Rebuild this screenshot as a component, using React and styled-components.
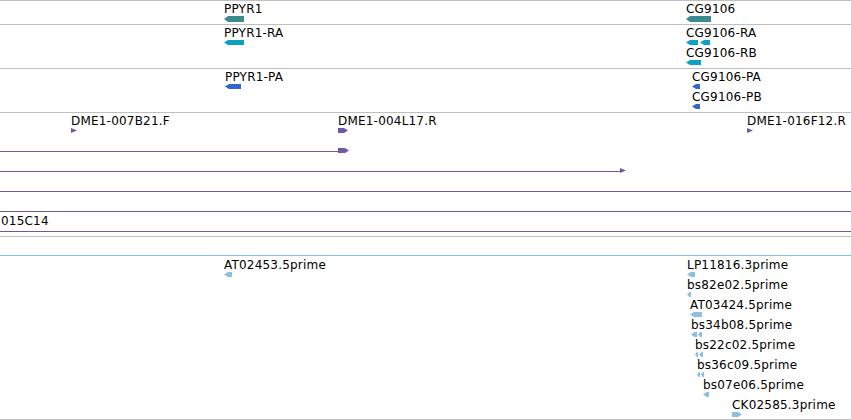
import styled, { createGlobalStyle } from 'styled-components';

const GlobalStyle = createGlobalStyle`
  html, body {
    margin: 0;
    padding: 0;
    background: #ffffff;
  }
  body {
    font-family: 'DejaVu Sans', 'Liberation Sans', sans-serif;
  }
`;

const WIDTH = 851;

const tracks = [
  {
    color: '#3b8b8d',
    h: 6,
    rows: [
      {
        features: [
          { x: 224, label: 'PPYR1', parts: [[0, 20, 'L']] },
          { x: 686, label: 'CG9106', parts: [[0, 25, 'L']] },
        ],
      },
    ],
  },
  {
    color: '#0ba2c2',
    h: 5,
    rows: [
      {
        features: [
          { x: 224, label: 'PPYR1-RA', parts: [[0, 20, 'L']] },
          { x: 686, label: 'CG9106-RA', parts: [[0, 12, 'L'], [14, 24, 'L']] },
        ],
      },
      {
        features: [{ x: 686, label: 'CG9106-RB', parts: [[0, 15, 'L']] }],
      },
    ],
  },
  {
    color: '#3366cc',
    h: 5,
    rows: [
      {
        features: [
          { x: 225, label: 'PPYR1-PA', parts: [[0, 16, 'L']] },
          { x: 692, label: 'CG9106-PA', parts: [[0, 8, 'L']] },
        ],
      },
      {
        features: [{ x: 692, label: 'CG9106-PB', parts: [[0, 8, 'L']] }],
      },
    ],
  },
  {
    color: '#6e58a8',
    h: 5,
    rows: [
      {
        features: [
          { x: 71, label: 'DME1-007B21.F', parts: [[0, 6, 'T']] },
          { x: 338, label: 'DME1-004L17.R', parts: [[0, 10, 'R']] },
          { x: 747, label: 'DME1-016F12.R', parts: [[0, 6, 'T']] },
        ],
      },
      {
        line: 338,
        features: [{ x: 338, label: '', parts: [[0, 11, 'R']] }],
      },
      {
        line: 620,
        features: [{ x: 620, label: '', parts: [[0, 6, 'T']] }],
      },
      { line: WIDTH, features: [] },
      { line: WIDTH, features: [] },
      {
        line: WIDTH,
        features: [{ x: 1, label: '015C14', parts: [] }],
      },
    ],
  },
  {
    color: '#8cbfe2',
    h: 5,
    last: true,
    rows: [
      { line: WIDTH, features: [] },
      {
        features: [
          { x: 224, label: 'AT02453.5prime', parts: [[0, 8, 'L']] },
          { x: 687, label: 'LP11816.3prime', parts: [[0, 8, 'L']] },
        ],
      },
      { features: [{ x: 687, label: 'bs82e02.5prime', parts: [[0, 4, 'L']] }] },
      { features: [{ x: 690, label: 'AT03424.5prime', parts: [[0, 12, 'L']] }] },
      { features: [{ x: 691, label: 'bs34b08.5prime', parts: [[0, 6, 'L'], [7, 11, 'L']] }] },
      { features: [{ x: 695, label: 'bs22c02.5prime', parts: [[0, 3, 'L'], [4, 8, 'L']] }] },
      { features: [{ x: 697, label: 'bs36c09.5prime', parts: [[0, 3, 'L'], [4, 7, 'L']] }] },
      { features: [{ x: 703, label: 'bs07e06.5prime', parts: [[0, 6, 'L']] }] },
      { features: [{ x: 732, label: 'CK02585.3prime', parts: [[0, 10, 'R']] }] },
    ],
  },
];

// arrow-shaped feature block; short blocks keep a bit of body behind the tip
const shape = ([a, b, dir], h) => {
  const t = Math.min(4, Math.max(2, (b - a) * 0.6));
  const m = h / 2;
  if (dir === 'L') return `${a},${m} ${a + t},0 ${b},0 ${b},${h} ${a + t},${h}`;
  if (dir === 'R') return `${a},0 ${b - t},0 ${b},${m} ${b - t},${h} ${a},${h}`;
  return `${a},0 ${b},${m} ${a},${h}`;
};

const Glyph = ({ parts, color, h }) => {
  if (!parts.length) return null;
  const w = Math.max(...parts.map(p => p[1]));
  return (
    <GlyphSvg width={w} height={h} viewBox={`0 0 ${w} ${h}`}>
      {parts.map((p, i) => (
        <polygon key={i} points={shape(p, h)} fill={color} />
      ))}
    </GlyphSvg>
  );
};

const App = () => {
  return (
    <>
      <GlobalStyle />
      <Panel>
        {tracks.map((track, ti) => (
          <Track key={ti} $last={track.last}>
            {track.rows.map((row, ri) => (
              <Row key={ri}>
                {row.line && <Line $to={row.line} $color={track.color} />}
                {row.features.map((f, fi) => (
                  <Feature key={fi} $x={f.x}>
                    <Label>{f.label}</Label>
                    <Glyph parts={f.parts} color={track.color} h={track.h} />
                  </Feature>
                ))}
              </Row>
            ))}
          </Track>
        ))}
      </Panel>
    </>
  );
};

const Panel = styled.div`
  width: ${WIDTH}px;
  height: 420px;
  overflow: hidden;
  background: #ffffff;
  display: flex;
  flex-direction: column;
`;

const Track = styled.div`
  border-top: 1px solid #c0c0c0;
  border-bottom: ${p => (p.$last ? '1px solid #c0c0c0' : 'none')};
  padding: 2px 0 ${p => (p.$last ? 0 : 1)}px;
  display: flex;
  flex-direction: column;
`;

const Row = styled.div`
  position: relative;
  height: 20px;
`;

const Feature = styled.div`
  position: absolute;
  top: 0;
  left: ${p => p.$x}px;
`;

const Label = styled.div`
  height: 13px;
  font-size: 12px;
  line-height: 13px;
  letter-spacing: 0.2px;
  color: #000000;
  white-space: nowrap;
`;

const GlyphSvg = styled.svg`
  display: block;
`;

const Line = styled.div`
  position: absolute;
  top: 16px;
  left: 0;
  width: ${p => p.$to}px;
  height: 1px;
  background: ${p => p.$color};
`;

export default App;
